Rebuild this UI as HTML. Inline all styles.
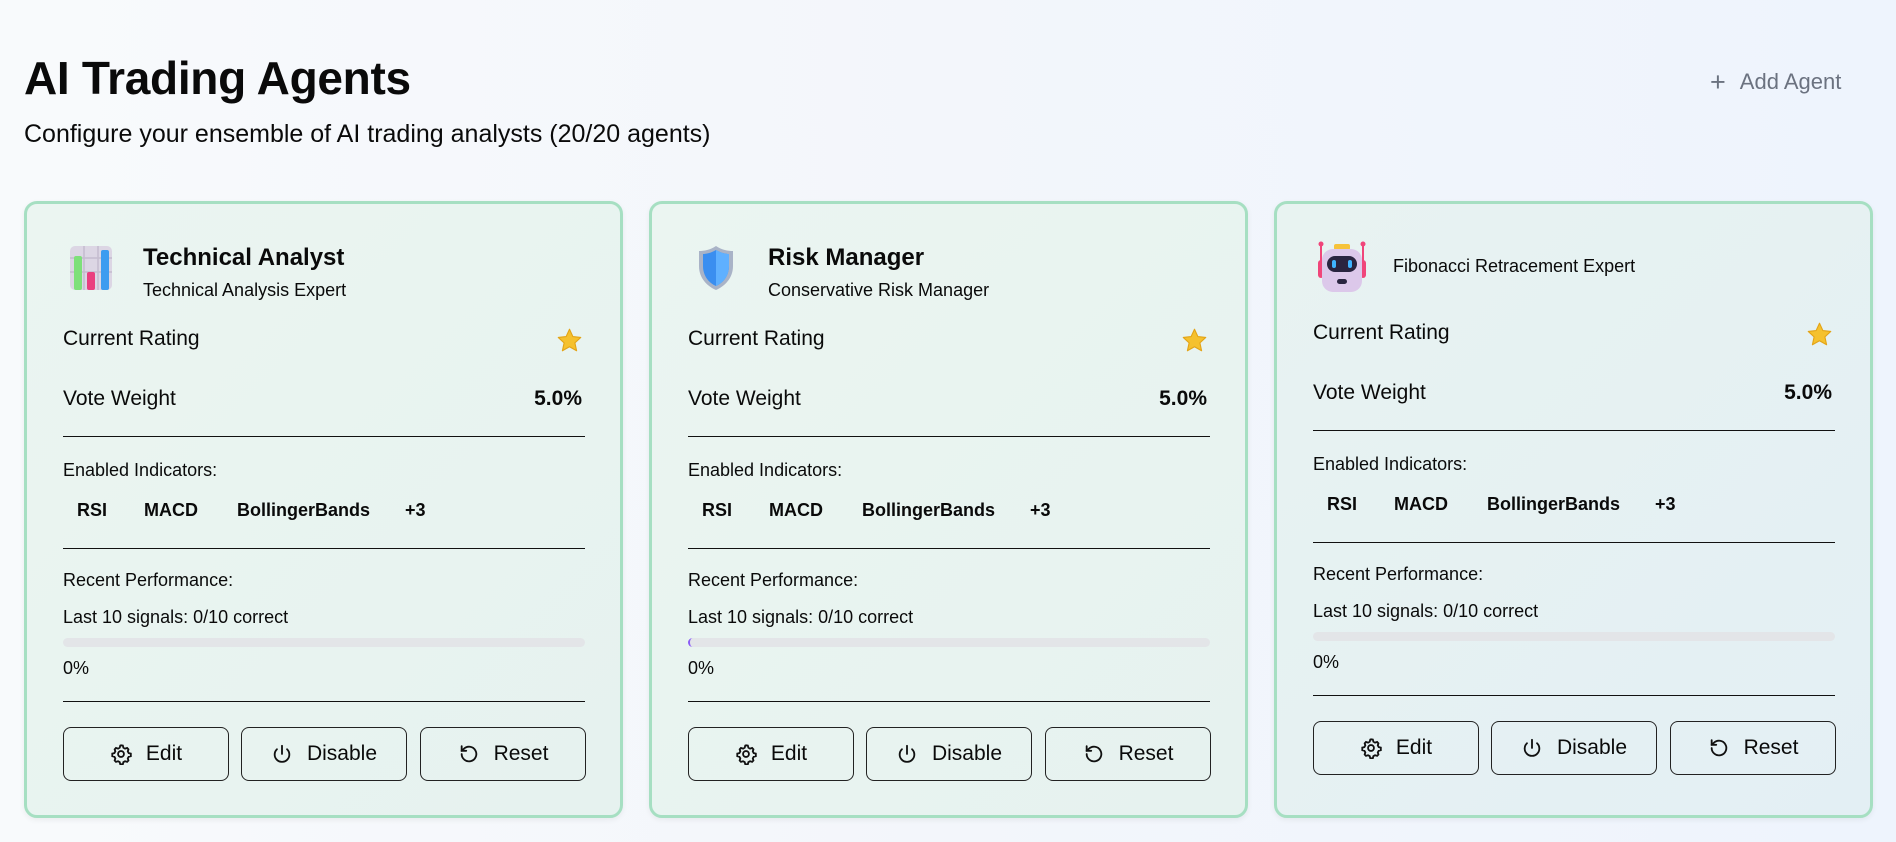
<!DOCTYPE html>
<html><head><meta charset="utf-8"><style>
*{margin:0;padding:0;box-sizing:border-box}
body{width:1896px;height:842px;overflow:hidden;font-family:"Liberation Sans",sans-serif;color:#0a0a0a;background:linear-gradient(90deg,#f8fafc 0%,#f3f6fb 50%,#eef4fd 100%);position:relative}
.a{position:absolute;white-space:nowrap}
h1{position:absolute;left:24px;top:51px;font-size:46px;font-weight:700;letter-spacing:-0.3px}
.sub{left:24px;top:120px;font-size:25px}
.add{left:1710px;top:67px;font-size:22px;color:#6b7280}
.card{position:absolute;top:201px;width:599px;height:617px;border:3px solid #a6dfc2;border-radius:13px;background:linear-gradient(135deg,#ebf5f1,#e6f2ef);box-shadow:0 2px 6px rgba(0,0,0,.06)}
.card.c3{background:linear-gradient(135deg,#e8f3f1,#e3eff4)}
.card .a{left:36px}
.t{font-size:24px;font-weight:700;line-height:28px}
.st{font-size:18px;line-height:22px}
.lb{font-size:21px;line-height:24px}
.sm{font-size:18px;line-height:22px}
.ln{position:absolute;left:36px;width:522px;height:1px;background:#111}
.chip{font-size:18px;font-weight:700;line-height:22px}
.bar{position:absolute;left:36px;width:522px;height:9px;border-radius:5px;background:#e3e5e8}
.btn{position:absolute;top:523px;width:166px;height:54px;border:1.5px solid #222;border-radius:8px;display:flex;align-items:center;justify-content:center;gap:14px;font-size:21px}
.btn svg{width:22px;height:22px}
</style></head><body>
<h1>AI Trading Agents</h1>
<div class="a sub">Configure your ensemble of AI trading analysts (20/20 agents)</div>
<div class="a add"><span style="font-size:27px;vertical-align:-2px;margin-right:14px;font-weight:300">+</span>Add Agent</div>

<div class="card" style="left:24px">
 <svg class="a" style="left:40px;top:38px" width="48" height="52" viewBox="0 0 48 52"><rect x="3" y="4" width="42" height="44" rx="5" fill="#dcd6e4"/><path d="M3 16h42M3 30h42M17 4v44M31 4v44" stroke="#c4bccf" stroke-width="1.5"/><rect x="7" y="14" width="8" height="34" rx="2" fill="#7ee07a"/><rect x="20" y="30" width="8" height="18" rx="2" fill="#ea3f7f"/><rect x="34" y="8" width="8" height="40" rx="2" fill="#3d9cf0"/></svg>
 <div class="a t" style="left:116px;top:40px">Technical Analyst</div>
 <div class="a st" style="left:116px;top:75px">Technical Analysis Expert</div>
 <div class="a lb" style="top:123px">Current Rating</div>
 <svg class="a" style="left:529px;top:123px" width="27" height="27" viewBox="0 0 24 24"><path d="M12 2l3 6.5 7 .8-5.2 4.8 1.5 7L12 17.6 5.7 21.1l1.5-7L2 9.3l7-.8z" fill="#f5c12e" stroke="#e3a417" stroke-width="1" stroke-linejoin="round"/></svg>
 <div class="a lb" style="top:183px">Vote Weight</div>
 <div class="a lb" style="left:auto;right:38px;top:183px;font-weight:700">5.0%</div>
 <div class="ln" style="top:232px"></div>
 <div class="a sm" style="top:255px">Enabled Indicators:</div>
 <div class="a chip" style="left:50px;top:295px">RSI</div><div class="a chip" style="left:117px;top:295px">MACD</div><div class="a chip" style="left:210px;top:295px">BollingerBands</div><div class="a chip" style="left:378px;top:295px">+3</div>
 <div class="ln" style="top:344px"></div>
 <div class="a sm" style="top:365px">Recent Performance:</div>
 <div class="a sm" style="top:402px">Last 10 signals: 0/10 correct</div>
 <div class="bar" style="top:434px"></div>
 <div class="a sm" style="top:453px">0%</div>
 <div class="ln" style="top:497px"></div>
 <div class="btn" style="left:36px"><svg viewBox="0 0 24 24" fill="none" stroke="#111" stroke-width="2"><path d="M12 2.5l2 .3.6 2.3 1.8 1 2.3-.7 1.4 1.5-.7 2.3 1 1.8 2.3.6v2.8l-2.3.6-1 1.8.7 2.3-1.4 1.5-2.3-.7-1.8 1-.6 2.3h-2.8l-.6-2.3-1.8-1-2.3.7-1.4-1.5.7-2.3-1-1.8-2.3-.6v-2.8l2.3-.6 1-1.8-.7-2.3 1.4-1.5 2.3.7 1.8-1 .6-2.3z"/><circle cx="12" cy="12" r="3.2"/></svg>Edit</div>
 <div class="btn" style="left:214px"><svg viewBox="0 0 24 24" fill="none" stroke="#111" stroke-width="2" stroke-linecap="round"><path d="M12 3v9"/><path d="M6.5 6.8a8 8 0 1 0 11 0"/></svg>Disable</div>
 <div class="btn" style="left:393px"><svg viewBox="0 0 24 24" fill="none" stroke="#111" stroke-width="2" stroke-linecap="round"><path d="M4 12a8 8 0 1 0 2.4-5.7L4 8.5"/><path d="M4 3.5v5h5"/></svg>Reset</div>
</div>

<div class="card" style="left:649px">
 <svg class="a" style="left:44px;top:40px" width="40" height="48" viewBox="0 0 40 48"><path d="M20 2C14 6 8 7 3 7v15c0 12 8 20 17 24 9-4 17-12 17-24V7c-5 0-11-1-17-5z" fill="#a9b3c7"/><path d="M20 6C15 9 10 10 7 10v12c0 10 6 17 13 20 7-3 13-10 13-20V10c-3 0-8-1-13-4z" fill="#3a8ef0"/><path d="M20 6v36c7-3 13-10 13-20V10c-3 0-8-1-13-4z" fill="#5fb0ff"/></svg>
 <div class="a t" style="left:116px;top:40px">Risk Manager</div>
 <div class="a st" style="left:116px;top:75px">Conservative Risk Manager</div>
 <div class="a lb" style="top:123px">Current Rating</div>
 <svg class="a" style="left:529px;top:123px" width="27" height="27" viewBox="0 0 24 24"><path d="M12 2l3 6.5 7 .8-5.2 4.8 1.5 7L12 17.6 5.7 21.1l1.5-7L2 9.3l7-.8z" fill="#f5c12e" stroke="#e3a417" stroke-width="1" stroke-linejoin="round"/></svg>
 <div class="a lb" style="top:183px">Vote Weight</div>
 <div class="a lb" style="left:auto;right:38px;top:183px;font-weight:700">5.0%</div>
 <div class="ln" style="top:232px"></div>
 <div class="a sm" style="top:255px">Enabled Indicators:</div>
 <div class="a chip" style="left:50px;top:295px">RSI</div><div class="a chip" style="left:117px;top:295px">MACD</div><div class="a chip" style="left:210px;top:295px">BollingerBands</div><div class="a chip" style="left:378px;top:295px">+3</div>
 <div class="ln" style="top:344px"></div>
 <div class="a sm" style="top:365px">Recent Performance:</div>
 <div class="a sm" style="top:402px">Last 10 signals: 0/10 correct</div>
 <div class="bar" style="top:434px;border-left:2px solid #8b5cf6"></div>
 <div class="a sm" style="top:453px">0%</div>
 <div class="ln" style="top:497px"></div>
 <div class="btn" style="left:36px"><svg viewBox="0 0 24 24" fill="none" stroke="#111" stroke-width="2"><path d="M12 2.5l2 .3.6 2.3 1.8 1 2.3-.7 1.4 1.5-.7 2.3 1 1.8 2.3.6v2.8l-2.3.6-1 1.8.7 2.3-1.4 1.5-2.3-.7-1.8 1-.6 2.3h-2.8l-.6-2.3-1.8-1-2.3.7-1.4-1.5.7-2.3-1-1.8-2.3-.6v-2.8l2.3-.6 1-1.8-.7-2.3 1.4-1.5 2.3.7 1.8-1 .6-2.3z"/><circle cx="12" cy="12" r="3.2"/></svg>Edit</div>
 <div class="btn" style="left:214px"><svg viewBox="0 0 24 24" fill="none" stroke="#111" stroke-width="2" stroke-linecap="round"><path d="M12 3v9"/><path d="M6.5 6.8a8 8 0 1 0 11 0"/></svg>Disable</div>
 <div class="btn" style="left:393px"><svg viewBox="0 0 24 24" fill="none" stroke="#111" stroke-width="2" stroke-linecap="round"><path d="M4 12a8 8 0 1 0 2.4-5.7L4 8.5"/><path d="M4 3.5v5h5"/></svg>Reset</div>
</div>

<div class="card c3" style="left:1274px">
 <svg class="a" style="left:40px;top:36px" width="50" height="54" viewBox="0 0 50 54"><path d="M4 4v24M46 4v24" stroke="#f0457a" stroke-width="2"/><circle cx="4" cy="4" r="2.5" fill="#f0457a"/><circle cx="46" cy="4" r="2.5" fill="#f0457a"/><rect x="17" y="4" width="16" height="6" rx="2" fill="#f6c33a"/><rect x="1" y="20" width="6" height="18" rx="3" fill="#f0457a"/><rect x="43" y="20" width="6" height="18" rx="3" fill="#f0457a"/><rect x="5" y="9" width="40" height="43" rx="11" fill="#dcc8ea"/><rect x="10" y="16" width="30" height="16" rx="8" fill="#2a2540"/><rect x="15" y="20" width="4" height="8" rx="2" fill="#3fb4ff"/><rect x="31" y="20" width="4" height="8" rx="2" fill="#3fb4ff"/><rect x="20" y="39" width="10" height="5" rx="2.5" fill="#2a2540"/></svg>
 <div class="a st" style="left:116px;top:51px">Fibonacci Retracement Expert</div>
 <div class="a lb" style="top:117px">Current Rating</div>
 <svg class="a" style="left:529px;top:117px" width="27" height="27" viewBox="0 0 24 24"><path d="M12 2l3 6.5 7 .8-5.2 4.8 1.5 7L12 17.6 5.7 21.1l1.5-7L2 9.3l7-.8z" fill="#f5c12e" stroke="#e3a417" stroke-width="1" stroke-linejoin="round"/></svg>
 <div class="a lb" style="top:177px">Vote Weight</div>
 <div class="a lb" style="left:auto;right:38px;top:177px;font-weight:700">5.0%</div>
 <div class="ln" style="top:226px"></div>
 <div class="a sm" style="top:249px">Enabled Indicators:</div>
 <div class="a chip" style="left:50px;top:289px">RSI</div><div class="a chip" style="left:117px;top:289px">MACD</div><div class="a chip" style="left:210px;top:289px">BollingerBands</div><div class="a chip" style="left:378px;top:289px">+3</div>
 <div class="ln" style="top:338px"></div>
 <div class="a sm" style="top:359px">Recent Performance:</div>
 <div class="a sm" style="top:396px">Last 10 signals: 0/10 correct</div>
 <div class="bar" style="top:428px"></div>
 <div class="a sm" style="top:447px">0%</div>
 <div class="ln" style="top:491px"></div>
 <div class="btn" style="left:36px;top:517px"><svg viewBox="0 0 24 24" fill="none" stroke="#111" stroke-width="2"><path d="M12 2.5l2 .3.6 2.3 1.8 1 2.3-.7 1.4 1.5-.7 2.3 1 1.8 2.3.6v2.8l-2.3.6-1 1.8.7 2.3-1.4 1.5-2.3-.7-1.8 1-.6 2.3h-2.8l-.6-2.3-1.8-1-2.3.7-1.4-1.5.7-2.3-1-1.8-2.3-.6v-2.8l2.3-.6 1-1.8-.7-2.3 1.4-1.5 2.3.7 1.8-1 .6-2.3z"/><circle cx="12" cy="12" r="3.2"/></svg>Edit</div>
 <div class="btn" style="left:214px;top:517px"><svg viewBox="0 0 24 24" fill="none" stroke="#111" stroke-width="2" stroke-linecap="round"><path d="M12 3v9"/><path d="M6.5 6.8a8 8 0 1 0 11 0"/></svg>Disable</div>
 <div class="btn" style="left:393px;top:517px"><svg viewBox="0 0 24 24" fill="none" stroke="#111" stroke-width="2" stroke-linecap="round"><path d="M4 12a8 8 0 1 0 2.4-5.7L4 8.5"/><path d="M4 3.5v5h5"/></svg>Reset</div>
</div>
</body></html>
